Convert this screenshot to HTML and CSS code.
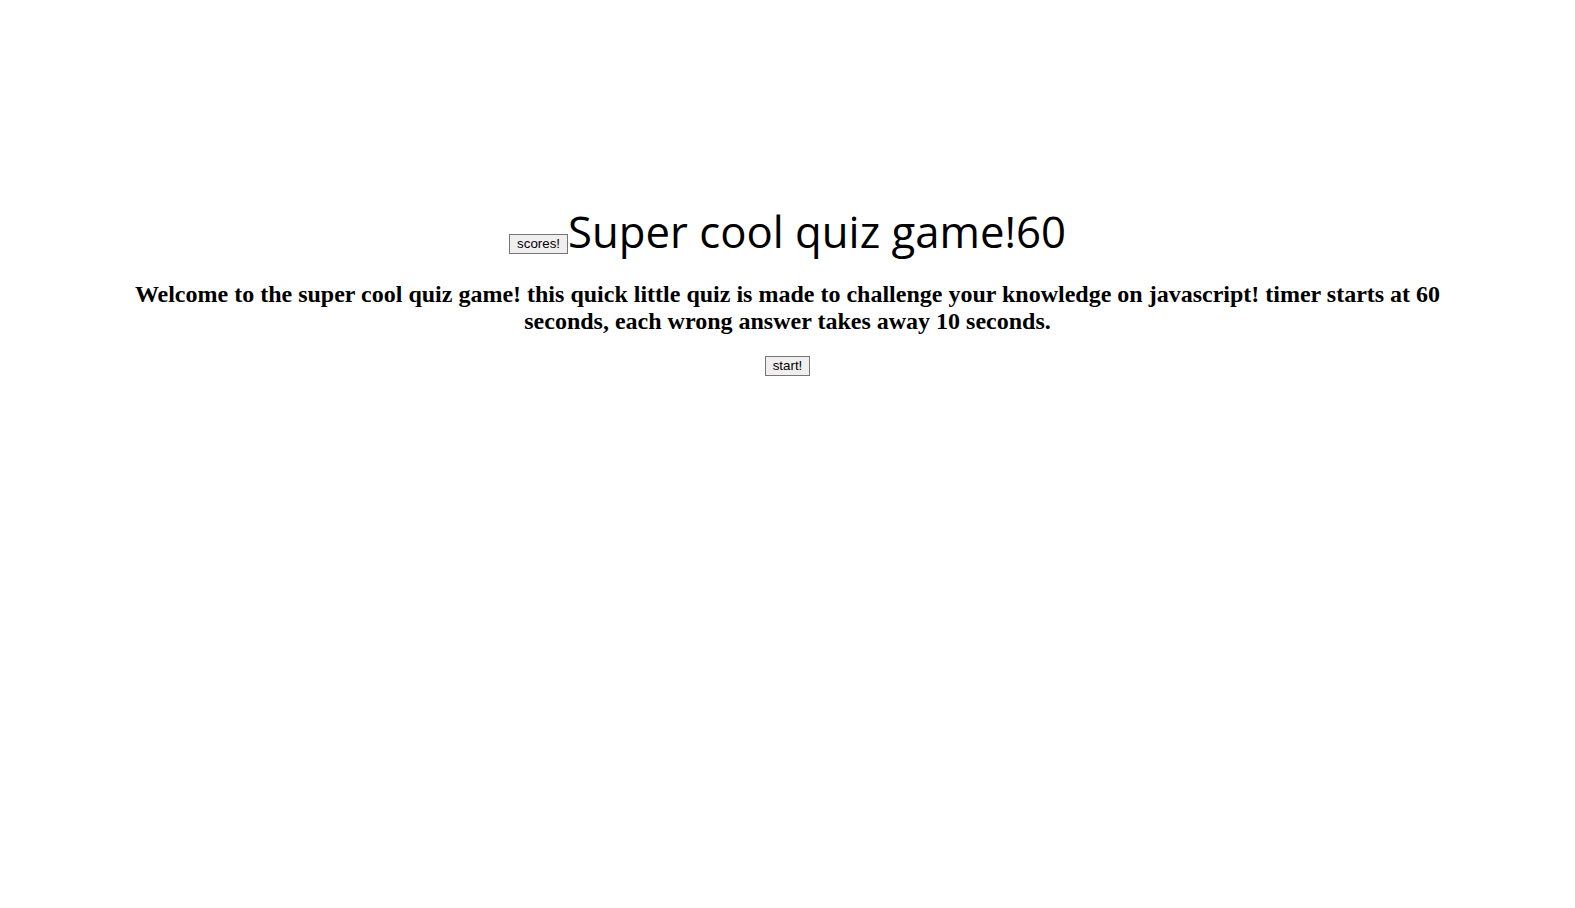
FILE: index.html
```html
<!DOCTYPE html>
<html>
<head>
<meta charset="utf-8">
<title>Quiz</title>
<link rel="stylesheet" href="styles.css">
</head>
<body>
<header class="top">
  <h1 class="title"><button class="btn">scores!</button>Super cool quiz game!<span class="timer">60</span></h1>
</header>
<main class="intro">
  <h2 class="desc">Welcome to the super cool quiz game! this quick little quiz is made to challenge your knowledge on javascript! timer starts at 60 seconds, each wrong answer takes away 10 seconds.</h2>
  <button class="btn">start!</button>
</main>
</body>
</html>
```

FILE: styles.css
```css
html, body {
  margin: 0;
  padding: 0;
  background: #ffffff;
  color: #000000;
}
body {
  font-family: "Liberation Serif", "Times New Roman", serif;
  text-align: center;
  padding: 8px 133px;
}
.top {
  padding-top: 193px;
}
.title {
  margin: 0;
  font-family: "Open Sans", "Liberation Sans", sans-serif;
  font-weight: 400;
  font-size: 43.7px;
  line-height: 60px;
}
.desc {
  margin: 20px 0 21px;
  font-size: 24px;
  font-weight: bold;
  line-height: 27px;
}
.btn {
  font-family: "Liberation Sans", Arial, sans-serif;
  font-size: 13.33px;
  color: #000;
  background: #efefef;
  border: 1px solid #767676;
  border-radius: 0;
  padding: 1px 7px;
  line-height: 16px;
  vertical-align: baseline;
}
```
